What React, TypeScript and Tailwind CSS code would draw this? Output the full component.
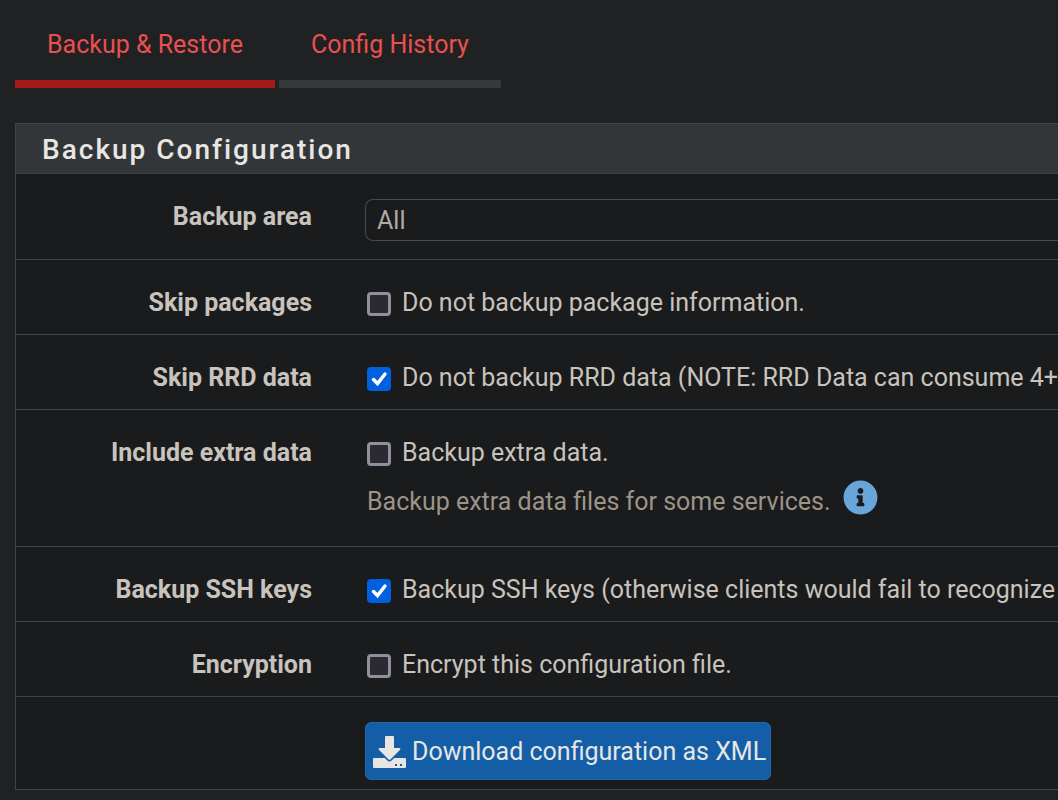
import React from 'react';
import { FaInfoCircle } from 'react-icons/fa';

const tabs = [
  { label: 'Backup & Restore', active: true },
  { label: 'Config History', active: false },
];

const DownloadIcon: React.FC = () => (
  <svg viewBox="0 0 33 32" className="h-8 w-[33px] shrink-0 fill-current" aria-hidden="true">
    <path d="M13 0h7a1 1 0 0 1 1 1v11h5.500q1.500 .3 .6 1.700l-9.400 9.600q-1.200 1-2.400 0l-9.400-9.600q-.9-1.400 .6-1.700H12V1a1 1 0 0 1 1-1z" />
    <path
      fillRule="evenodd"
      d="M1 22h10.800l2.500 2.500q2.200 1.800 4.400 0l2.500-2.500H32a1 1 0 0 1 1 1v8a1 1 0 0 1-1 1H1a1 1 0 0 1-1-1v-8a1 1 0 0 1 1-1zM22 28v2h2v-2zM27 28v2h2v-2z"
    />
  </svg>
);

interface RowProps {
  label?: string;
  htmlFor?: string;
  children: React.ReactNode;
}

const Row: React.FC<RowProps> = ({ label, htmlFor, children }) => (
  <div className="flex border-b border-[#404244] pt-[25px]">
    <div className="w-[296px] shrink-0 text-right font-bold">
      {label && <label htmlFor={htmlFor}>{label}</label>}
    </div>
    <div className="min-w-0 flex-1 pl-[53px]">{children}</div>
  </div>
);

interface CheckProps {
  id: string;
  text: string;
  defaultChecked?: boolean;
}

const Check: React.FC<CheckProps> = ({ id, text, defaultChecked }) => (
  <div className="flex items-center pl-0.5 whitespace-nowrap">
    <span className="mt-0.5 mr-[11px] grid shrink-0">
      <input
        id={id}
        type="checkbox"
        aria-label={text}
        defaultChecked={defaultChecked}
        className="peer col-start-1 row-start-1 size-6 appearance-none rounded-sm border-3 border-[#8f8f9d] bg-[#2b2a33] checked:border-[#0060df] checked:bg-[#0060df]"
      />
      <svg
        viewBox="0 0 24 24"
        className="pointer-events-none invisible col-start-1 row-start-1 size-6 fill-none stroke-white peer-checked:visible"
      >
        <path d="M6.500 12.500l4 4L18 7" strokeWidth="3.500" strokeLinecap="round" />
      </svg>
    </span>
    <span>{text}</span>
  </div>
);

const App: React.FC = () => {
  return (
    <div className="min-h-screen overflow-hidden bg-[#202123] pl-[15px] font-['Roboto',sans-serif] text-[25px] leading-9 text-[#c8c3bc]">
      <nav className="flex gap-1">
        {tabs.map((tab) => (
          <a
            key={tab.label}
            href="#"
            className={`border-b-8 px-8 pt-[27px] pb-[17px] text-[#e9504f] ${tab.active ? 'border-[#a51a17]' : 'border-[#35393b]'}`}
          >
            {tab.label}
          </a>
        ))}
      </nav>

      <main className="mt-[35px] border border-r-0 border-[#404244] bg-[#1a1b1c]">
        <h2 className="border-b border-[#404244] bg-[#323638] pt-2 pb-1.5 pl-[26px] text-[28px] leading-[35px] font-medium tracking-[2px] text-[#e8e6e3]">
          Backup Configuration
        </h2>

        <form>
          <Row label="Backup area" htmlFor="backuparea">
            <select
              id="backuparea"
              className="mb-[18px] block h-[42px] w-full appearance-none rounded-l-lg border border-r-0 border-[#484b4d] bg-[#1a1b1c] pt-0.5 pl-[11px] text-[#b1aba1]"
            >
              <option>All</option>
            </select>
          </Row>

          <Row label="Skip packages" htmlFor="nopackages">
            <div className="pb-[13px]">
              <Check id="nopackages" text="Do not backup package information." />
            </div>
          </Row>

          <Row label="Skip RRD data" htmlFor="donotbackuprrd">
            <div className="pb-[13px]">
              <Check
                id="donotbackuprrd"
                text="Do not backup RRD data (NOTE: RRD Data can consume 4+ megabytes of config.xml space!)"
                defaultChecked
              />
            </div>
          </Row>

          <Row label="Include extra data" htmlFor="backupdata">
            <div className="pb-[26px]">
              <Check id="backupdata" text="Backup extra data." />
              <div className="flex items-start pt-[9px] pl-0.5 text-[#9d9488]">
                <p className="pt-1">Backup extra data files for some services.</p>
                <button type="button" aria-label="More information" className="ml-3 text-[#68a5d9]">
                  <FaInfoCircle className="size-[35px]" />
                </button>
              </div>
            </div>
          </Row>

          <Row label="Backup SSH keys" htmlFor="backupssh">
            <div className="pb-[13px]">
              <Check
                id="backupssh"
                text="Backup SSH keys (otherwise clients would fail to recognize the host keys after restore)"
                defaultChecked
              />
            </div>
          </Row>

          <Row label="Encryption" htmlFor="encrypt">
            <div className="pb-[13px]">
              <Check id="encrypt" text="Encrypt this configuration file." />
            </div>
          </Row>

          <div className="pt-[25px] pb-[9px] pl-[349px]">
            <button
              type="button"
              className="flex h-[58px] items-center gap-1.5 rounded-md border border-[#2567a2] bg-[#145ea8] pt-0.5 pr-1 pl-[7px] whitespace-nowrap text-[#e8e6e3]"
            >
              <DownloadIcon />
              Download configuration as XML
            </button>
          </div>
        </form>
      </main>
    </div>
  );
};

export default App;
